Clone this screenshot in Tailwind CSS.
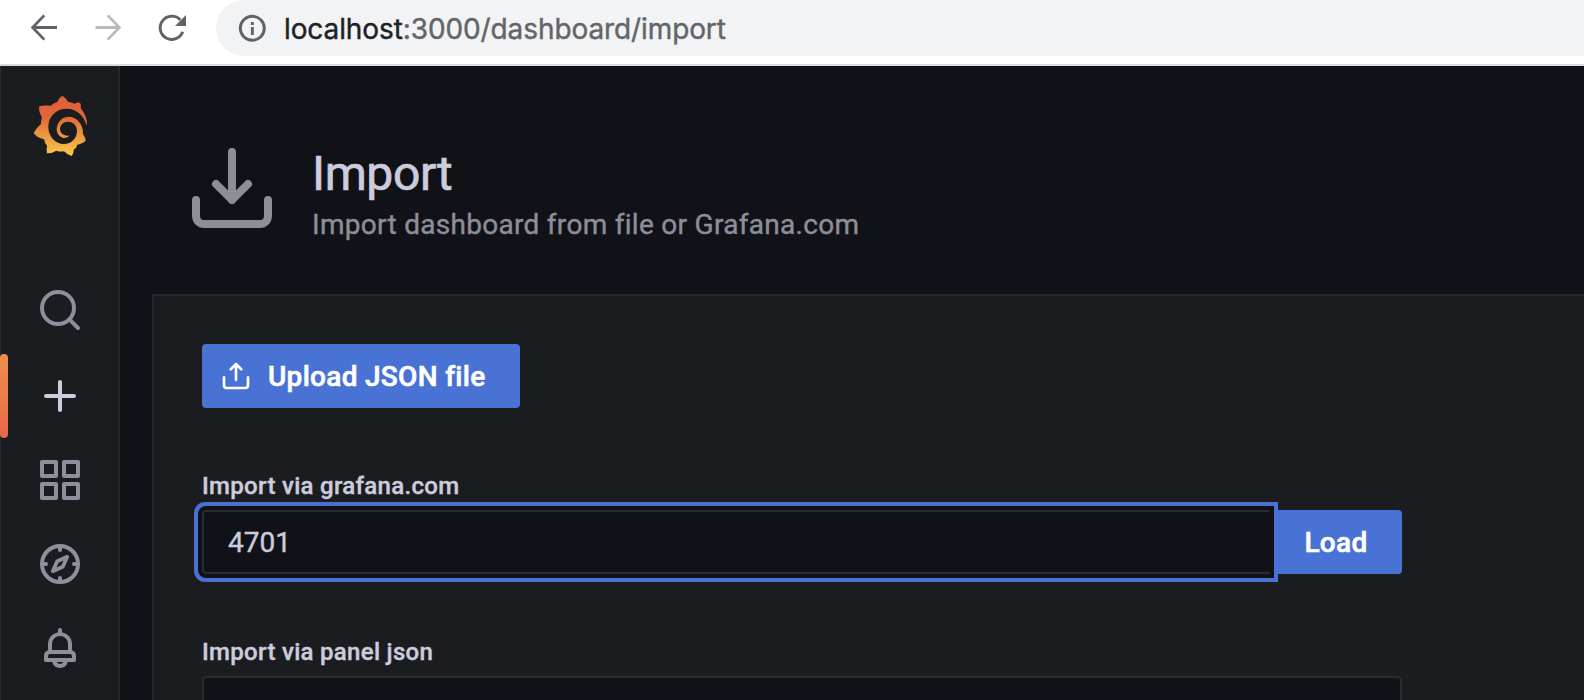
<!DOCTYPE html>
<html lang="en">
<head>
<meta charset="utf-8">
<title>Import - Grafana</title>
<script src="https://cdn.jsdelivr.net/npm/@tailwindcss/browser@4"></script>
</head>
<body class="flex h-[700px] w-[1584px] flex-col overflow-hidden bg-[#111217] font-['Roboto',sans-serif] text-[#ccccdc] [-webkit-text-stroke:0.4px_currentColor]">
  <!-- Browser toolbar -->
  <header class="flex h-[66px] shrink-0 items-start border-b-2 border-[#dadce0] bg-white">
    <div class="flex h-14 w-[216px] shrink-0 items-center">
      <svg class="ml-[28px] h-8 w-8" viewBox="0 0 32 32" fill="none" stroke="#5f6368" stroke-width="2.8"><path d="M29 15.500H5M16.300 3.400L4.600 15.500l11.700 12.100"/></svg>
      <svg class="ml-[32px] h-8 w-8" viewBox="0 0 32 32" fill="none" stroke="#bababc" stroke-width="2.8"><path d="M3.500 15.500H27M15.700 3.400L27.400 15.500l-11.700 12.100"/></svg>
      <svg class="ml-[32px] h-8 w-8" viewBox="0 0 32 32"><path d="M26.700 19.700A11.600 11.600 0 1 1 24.300 7.900" fill="none" stroke="#5f6368" stroke-width="2.900"/><path d="M30 3v11H19z" fill="#5f6368"/></svg>
    </div>
    <div class="flex h-14 flex-1 items-center rounded-l-full bg-[#f1f3f4]">
      <svg class="ml-[22px] h-7 w-7" viewBox="0 0 28 28"><circle cx="14.300" cy="14.300" r="12" fill="none" stroke="#5f6368" stroke-width="2.900"/><path d="M12.900 12.900h2.900v8h-2.900zM12.900 7.900h2.900v3h-2.900z" fill="#5f6368"/></svg>
      <span class="ml-[18px] pt-[2px] whitespace-nowrap font-['Inter',sans-serif] text-[28px] tracking-[-0.100px] text-[#636568]"><span class="text-[#202124]">localhost</span>:3000/dashboard/import</span>
    </div>
  </header>

  <div class="flex min-h-0 flex-1">
    <!-- Side menu -->
    <nav class="relative flex w-[120px] shrink-0 flex-col items-center border-l border-r-2 border-l-[#2b2c30] border-r-[#27282d] bg-[#1b1c1f] text-[#8f8f9b]">
      <svg class="mt-7 h-16 w-14" viewBox="96 42 168 192">
        <defs><linearGradient id="g" x1="0" y1="0" x2="0" y2="1"><stop offset=".15" stop-color="#e0623a"/><stop offset=".35" stop-color="#e2683a"/><stop offset=".65" stop-color="#eb9640"/><stop offset="1" stop-color="#f6cb48"/></linearGradient></defs>
        <path fill="url(#g)" d="M261 133Q260 106 242 85Q245 75 240 68Q231 67 224 71Q213 66 204 65Q195 51 187 48Q178 52 172 66Q160 70 152 77Q132 75 118 79Q115 94 126 113Q122 122 123 132Q107 145 101 159Q110 173 132 178Q134 190 141 197Q139 210 141 220Q155 221 169 212Q180 216 192 214Q202 225 215 228Q222 221 221 209Q230 203 232 194Q250 190 257 182Q257 172 249 162C251 132 229 110 205 110C183 111 170 130 170 149C171 164 183 174 195 174Q206 173 209 166Q203 169 196 166C186 164 180 157 180 148C180 135 190 125 204 125C221 125 231 138 231 153C231 176 213 192 192 192C164 191 145 168 145 140C145 109 169 86 200 86C230 86 252 107 259 134Z"/>
      </svg>
      <svg class="mt-[128px] h-12 w-12" viewBox="0 0 24 24" fill="none" stroke="currentColor" stroke-width="2" stroke-linecap="round"><circle cx="11" cy="11" r="8"/><path d="M16.700 16.700L21 21"/></svg>
      <svg class="mt-[38px] h-12 w-12 text-[#ccccdc]" viewBox="0 0 24 24" fill="none" stroke="currentColor" stroke-width="2" stroke-linecap="round"><path d="M12 5v14M5 12h14"/></svg>
      <svg class="mt-9 h-12 w-12" viewBox="0 0 24 24" fill="none" stroke="currentColor" stroke-width="2" stroke-linejoin="round"><path d="M3 3h7v7H3zM14 3h7v7h-7zM3 14h7v7H3zM14 14h7v7h-7z"/></svg>
      <svg class="mt-9 h-12 w-12" viewBox="0 0 24 24" fill="none" stroke="currentColor" stroke-width="2" stroke-linecap="round" stroke-linejoin="round"><circle cx="12" cy="12" r="9"/><path d="M12 3v2M12 21v-2M3 12h2M21 12h-2"/><path stroke-width="1.900" d="M15.600 8.400L10.600 10.600L8.400 15.600L13.400 13.400Z"/></svg>
      <svg class="mt-9 h-12 w-12" viewBox="0 0 24 24" fill="currentColor"><path d="M18,13.180V10a6,6,0,0,0-5-5.910V3a1,1,0,0,0-2,0V4.090A6,6,0,0,0,6,10v3.180A3,3,0,0,0,4,16v2a1,1,0,0,0,1,1H8.140a4,4,0,0,0,7.720,0H19a1,1,0,0,0,1-1V16A3,3,0,0,0,18,13.180ZM8,10a4,4,0,0,1,8,0v3H8Zm4,10a2,2,0,0,1-1.720-1h3.440A2,2,0,0,1,12,20Zm6-3H6V16a1,1,0,0,1,1-1H17a1,1,0,0,1,1,1Z"/></svg>
      <span class="absolute top-[288px] -left-px h-[84px] w-2 rounded bg-linear-to-b from-[#f0904a] to-[#e6684a]"></span>
    </nav>

    <main class="flex min-w-0 flex-1 flex-col pl-8">
      <div class="flex h-[228px] shrink-0 pt-[74px] pl-8">
        <svg class="h-24 w-24 text-[#8e8e99]" viewBox="0 0 24 24" fill="none" stroke="currentColor" stroke-width="2" stroke-linecap="round" stroke-linejoin="round"><path d="M12 3v12M8 11l4 4 4-4M3 15v4a2 2 0 0 0 2 2h14a2 2 0 0 0 2-2v-4"/></svg>
        <div class="ml-8 whitespace-nowrap">
          <h1 class="mt-[4px] text-[48px] leading-[60px] tracking-[-0.400px] [-webkit-text-stroke:0.7px_currentColor]">Import</h1>
          <div class="mt-[3px] text-[28px] leading-[36px] tracking-[0.290px] text-[#8e8e99]">Import dashboard from file or Grafana.com</div>
        </div>
      </div>

      <section class="flex flex-1 flex-col items-start border-t-2 border-l-2 border-[#27282d] bg-[#1b1c1f] pt-12 pl-12">
        <button class="flex h-16 w-[318px] shrink-0 items-center rounded bg-[#4872d3] pl-[18px] text-[28px] font-medium tracking-[0.300px] whitespace-nowrap text-white">
          <svg class="mr-4 h-8 w-8" viewBox="0 0 24 24" fill="currentColor"><path d="M8.710,7.710,11,5.410V15a1,1,0,0,0,2,0V5.410l2.290,2.300a1,1,0,0,0,1.420,0,1,1,0,0,0,0-1.420l-4-4a1,1,0,0,0-.330-.210,1,1,0,0,0-.760,0,1,1,0,0,0-.330.210l-4,4A1,1,0,1,0,8.710,7.710ZM21,12a1,1,0,0,0-1,1v6a1,1,0,0,1-1,1H5a1,1,0,0,1-1-1V13a1,1,0,0,0-2,0v6a3,3,0,0,0,3,3H19a3,3,0,0,0,3-3V13A1,1,0,0,0,21,12Z"/></svg>
          <span class="pt-[2px] [-webkit-text-stroke:0.6px_currentColor]">Upload JSON file</span>
        </button>
        <label class="mt-[63px] block text-[24px] leading-[30px] font-medium tracking-[0.300px]">Import via grafana.com</label>
        <div class="mt-[9px] flex h-16 w-[1200px] shrink-0">
          <div class="z-10 flex w-[1068px] items-center rounded-l border-2 border-r-0 border-[#2b2c31] bg-[#111217] pt-[2px] pl-6 text-[28px] tracking-[0.050px] shadow-[0_0_0_4px_#111217,0_0_0_8px_#4872d3]">4701</div>
          <button class="flex flex-1 items-center justify-center rounded-r bg-[#4872d3] pt-[2px] text-[28px] font-medium tracking-[0.300px] text-white [-webkit-text-stroke:0.6px_currentColor]">Load</button>
        </div>
        <label class="mt-[63px] block text-[24px] leading-[30px] font-medium tracking-[0.300px]">Import via panel json</label>
        <div class="mt-[9px] w-[1200px] flex-1 rounded-t border-2 border-b-0 border-[#2b2c31] bg-[#111217]"></div>
      </section>
    </main>
  </div>
</body>
</html>
